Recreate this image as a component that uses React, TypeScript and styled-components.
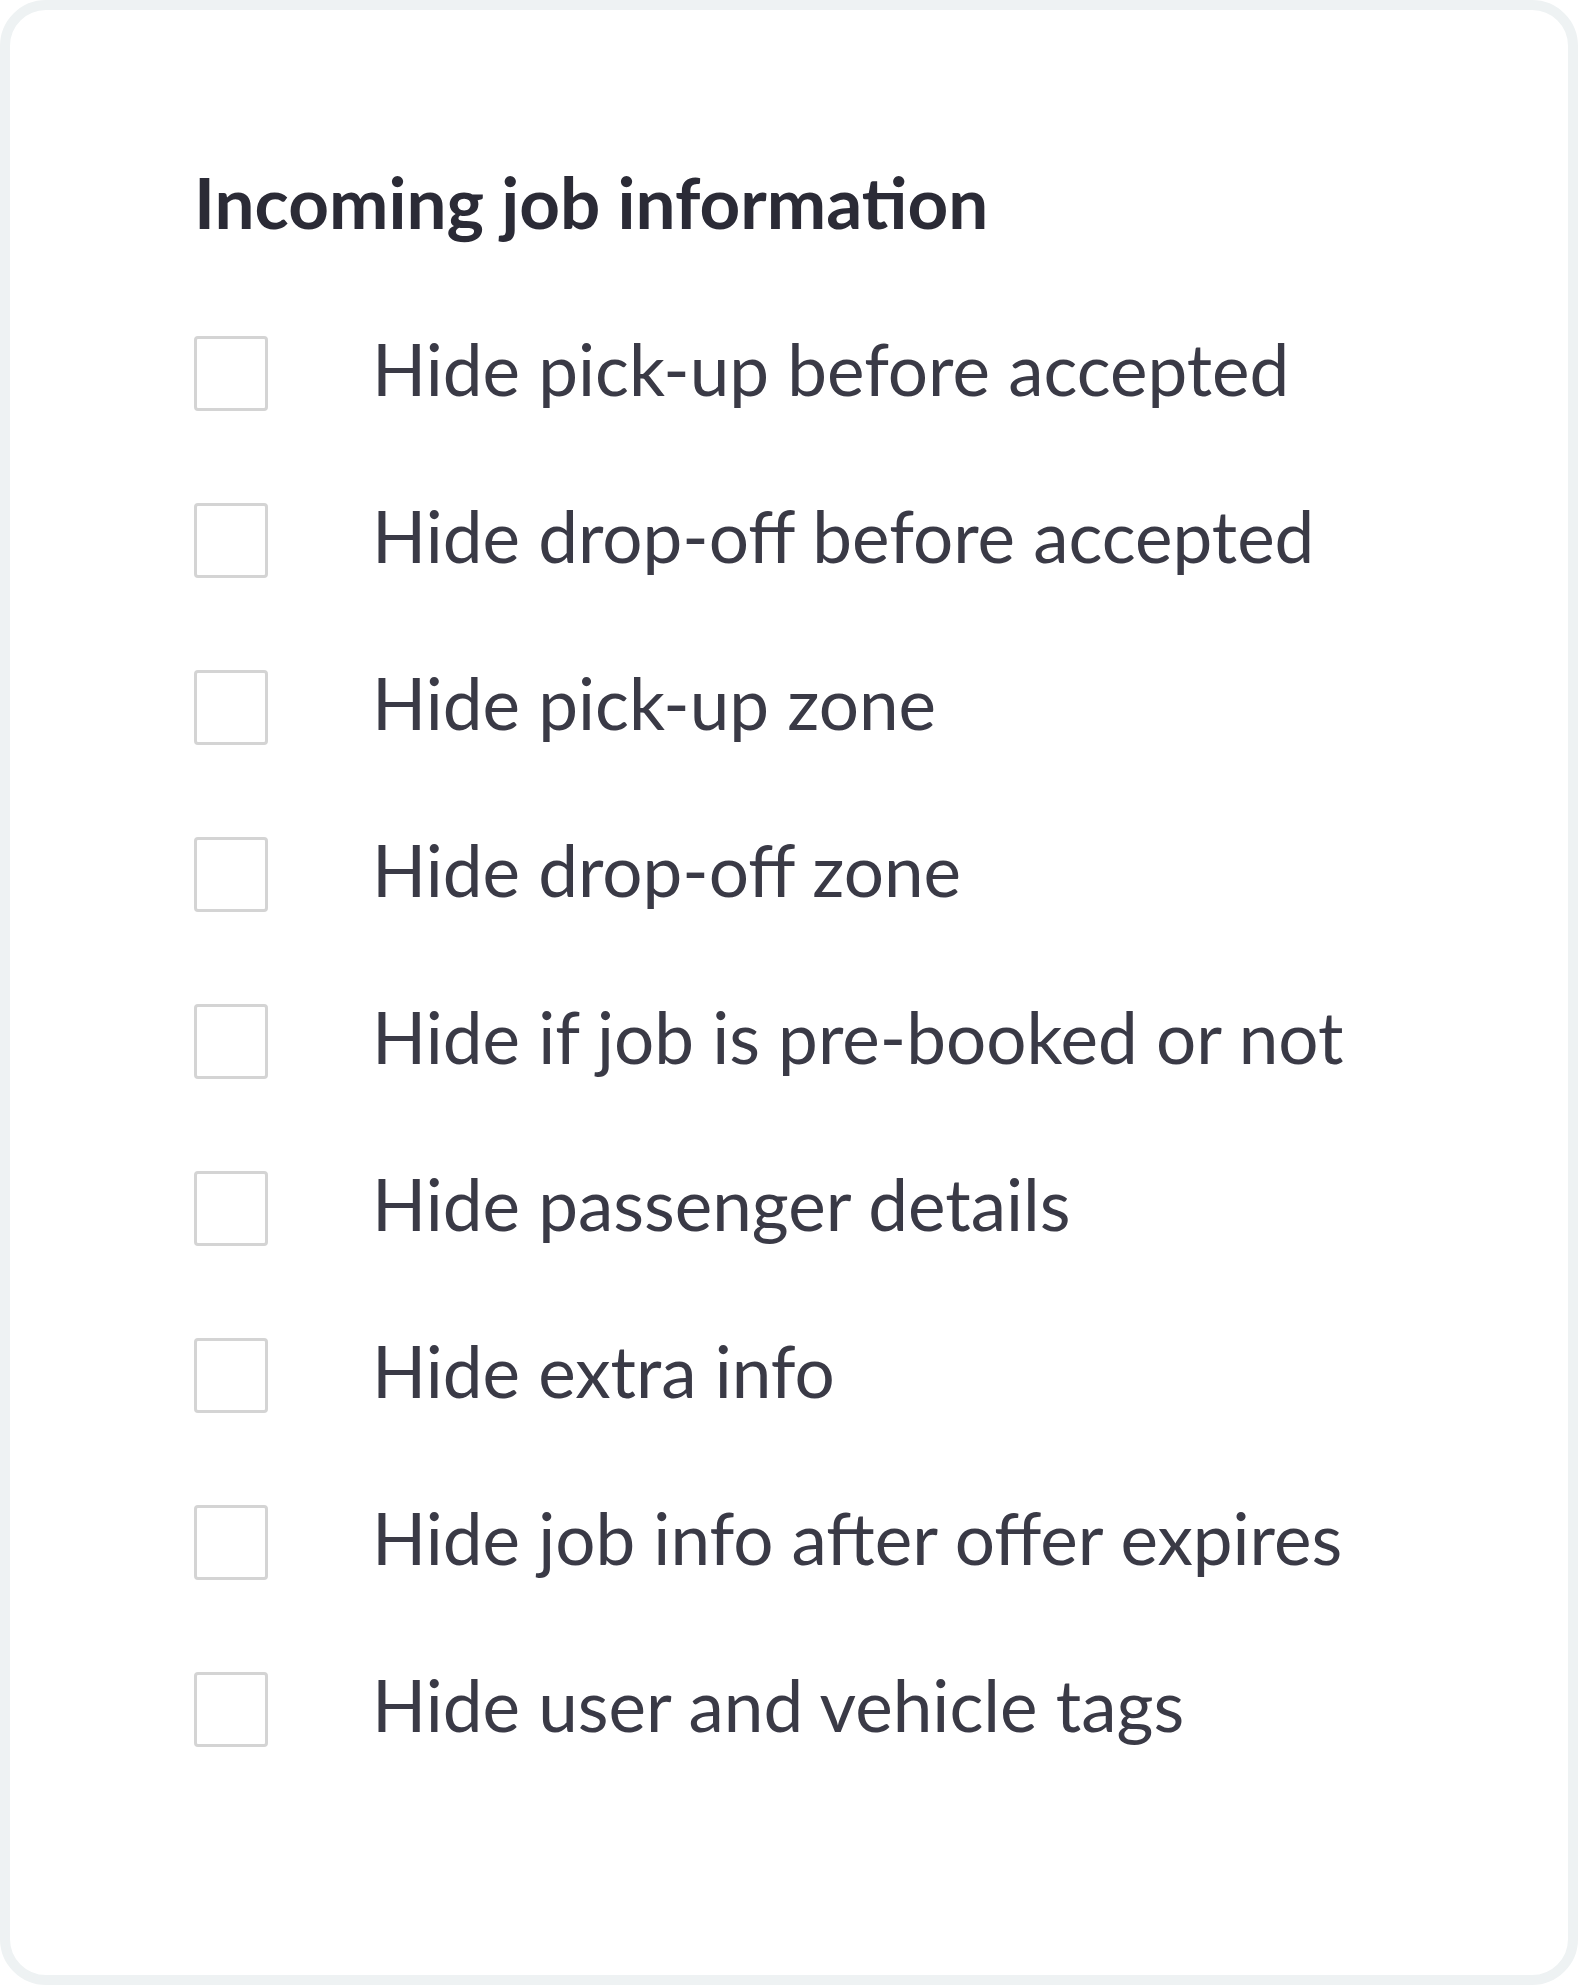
import React from 'react'
import styled, { createGlobalStyle } from 'styled-components'

const GlobalStyle = createGlobalStyle`
  html, body {
    margin: 0;
    padding: 0;
    background: #ffffff;
  }
  body {
    font-family: Lato, "Open Sans", sans-serif;
  }
`

const Card = styled.div({
  boxSizing: 'border-box',
  width: 1578,
  height: 1985,
  border: '10px solid #eef2f3',
  borderRadius: 46,
  background: '#ffffff',
  padding: '149px 0 0 184px',
})

const Title = styled.h2({
  margin: 0,
  fontFamily: 'Lato, sans-serif',
  fontWeight: 700,
  fontSize: 71,
  lineHeight: 1.2,
  color: '#2b2b36',
})

const List = styled.div({
  display: 'flex',
  flexDirection: 'column',
  gap: 92,
  marginTop: 92,
})

const Row = styled.label({
  display: 'flex',
  alignItems: 'center',
  gap: 104,
  height: 75,
  cursor: 'pointer',
})

const Box = styled.input.attrs({ type: 'checkbox' })({
  appearance: 'none',
  boxSizing: 'border-box',
  flex: 'none',
  width: 74,
  height: 75,
  margin: 0,
  border: '3px solid #d4d4d4',
  borderRadius: 4,
  background: '#ffffff',
})

const Text = styled.span({
  fontFamily: 'Lato, sans-serif',
  fontWeight: 400,
  fontSize: 71,
  lineHeight: '75px',
  color: '#3a3a46',
  whiteSpace: 'nowrap',
  marginTop: -11,
})

const options = [
  'Hide pick-up before accepted',
  'Hide drop-off before accepted',
  'Hide pick-up zone',
  'Hide drop-off zone',
  'Hide if job is pre-booked or not',
  'Hide passenger details',
  'Hide extra info',
  'Hide job info after offer expires',
  'Hide user and vehicle tags',
]

const App = () => (
  <>
    <GlobalStyle />
    <Card>
      <Title>Incoming job information</Title>
      <List>
        {options.map((o) => (
          <Row key={o}>
            <Box />
            <Text>{o}</Text>
          </Row>
        ))}
      </List>
    </Card>
  </>
)

export default App
